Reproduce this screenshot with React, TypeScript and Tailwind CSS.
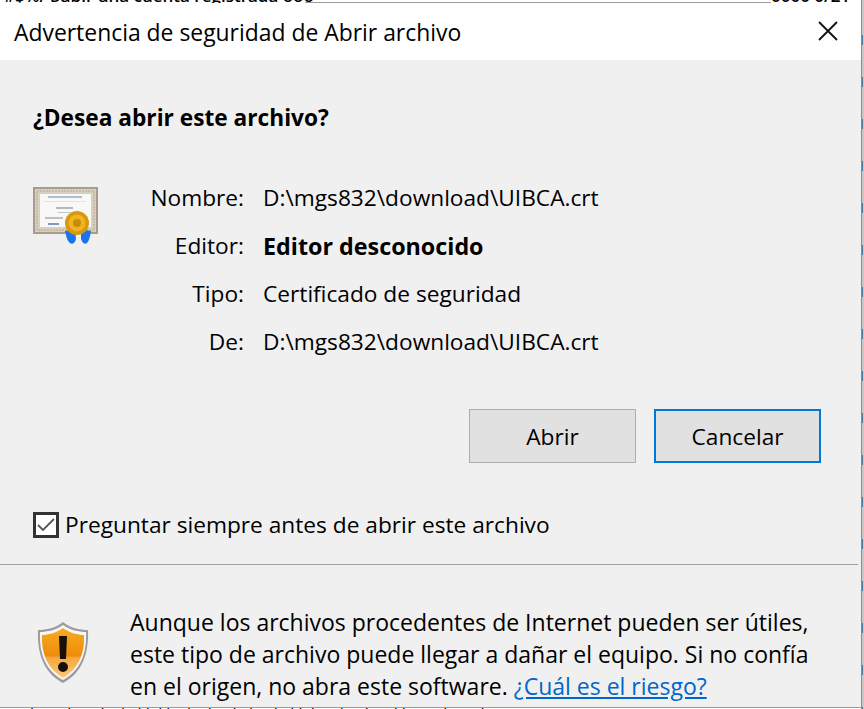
const rows = [
  { label: 'Nombre:', value: 'D:\\mgs832\\download\\UIBCA.crt', bold: false },
  { label: 'Editor:', value: 'Editor desconocido', bold: true },
  { label: 'Tipo:', value: 'Certificado de seguridad', bold: false },
  { label: 'De:', value: 'D:\\mgs832\\download\\UIBCA.crt', bold: false },
];

const CertIcon = () => (
  <svg width="66" height="58" viewBox="0 0 66 58" className="blur-[0.7px]">
    <rect x="0" y="0" width="65" height="47" fill="#a89d8c" />
    <rect x="2" y="2" width="61" height="43" fill="#d8cfbf" />
    <rect x="4" y="4" width="57" height="39" fill="none" stroke="#b5aa98" strokeWidth="1" strokeDasharray="2 1" />
    <rect x="7" y="7" width="51" height="33" fill="#f8f8f6" />
    <rect x="15" y="9" width="34" height="2" fill="#aebbdc" />
    <rect x="11" y="14" width="42" height="1" fill="#dfe3ee" />
    <rect x="23" y="20" width="17" height="2" fill="#b8b8bc" />
    <rect x="25" y="25" width="13" height="1" fill="#c4c4c4" />
    <rect x="12" y="30" width="18" height="2" fill="#bcc0c8" />
    <rect x="15" y="36" width="11" height="2" fill="#7f98c4" />
    <path d="M32 44 L42 42 L43 52 C42 57 38 58 36 55 C34 53 33 49 32 44 Z" fill="#1c74ea" />
    <path d="M48 42 L58 44 C57 50 56 54 54 56 C51 58 49 55 48 52 Z" fill="#1c74ea" />
    <circle cx="44" cy="36" r="12" fill="#d9970c" />
    <circle cx="44" cy="36" r="8.5" fill="#eeb422" />
    <circle cx="44" cy="36" r="4" fill="#c98a0c" />
  </svg>
);

const ShieldIcon = () => (
  <svg width="54" height="62" viewBox="0 0 54 62" className="blur-[0.4px]">
    <defs>
      <linearGradient id="shieldFill" x1="0" y1="0" x2="0" y2="1">
        <stop offset="0" stopColor="#f8ac20" />
        <stop offset="0.55" stopColor="#ee8c0c" />
        <stop offset="0.6" stopColor="#f6a83e" />
        <stop offset="1" stopColor="#fcc878" />
      </linearGradient>
    </defs>
    <path d="M27 0 C34 6 44 8 52 8 C53 32 46 51 27 61 C8 51 1 32 2 8 C10 8 20 6 27 0 Z" fill="#9c9c9c" />
    <path d="M27 3 C34 8 43 10 50 10 C51 32 44 49 27 58 C10 49 3 32 4 10 C11 10 20 8 27 3 Z" fill="#f6f6f6" />
    <path d="M27 6 C34 11 42 13 48 13 C49 32 42 47 27 56 C12 47 5 32 6 13 C12 13 20 11 27 6 Z" fill="url(#shieldFill)" />
    <path d="M23 14 L31 14 L30 37 L24 37 Z" fill="#17110a" />
    <circle cx="27" cy="45" r="5" fill="#17110a" />
  </svg>
);

export default function App() {
  return (
    <div className="flex h-[709px] w-[864px] overflow-hidden bg-white font-['Open_Sans','Noto_Sans',sans-serif] text-black">
      <div className="flex w-[861px] flex-col">
        <div className="flex h-[3px] items-start overflow-hidden text-[17px] font-semibold leading-[3px]">
          <span className="-mt-[6px] w-[305px] whitespace-nowrap pl-1">#$%/ Subir una cuenta registrada ooo</span>
          <div className="h-[3px] flex-1 border-b border-[#9a9a9a]" />
          <span className="-mt-[6px] w-[90px] whitespace-nowrap">0000 0/21</span>
        </div>

        <div className="flex h-[57px] items-center justify-between pl-[14px] pr-[23px] pt-[3px]">
          <span className="text-[22.9px]">Advertencia de seguridad de Abrir archivo</span>
          <svg width="20" height="20" viewBox="0 0 20 20" stroke="#111" strokeWidth="1.8" className="mb-1">
            <path d="M1 1 L19 19 M19 1 L1 19" />
          </svg>
        </div>

        <div className="flex h-[647px] flex-col overflow-hidden bg-[#f0f0f0] text-[22.7px]">
          <div className="pl-[33px] pt-[44px] font-bold leading-7">¿Desea abrir este archivo?</div>

          <div className="mt-[52px] flex pl-[33px]">
            <div className="w-[66px] pt-[3px]"><CertIcon /></div>
            <div className="ml-[45px] grid grid-cols-[100px_1fr] gap-x-[19px]">
              {rows.map((row) => (
                <div key={row.label} className="contents">
                  <span className="h-12 text-right leading-7">{row.label}</span>
                  <span className={row.bold ? 'text-[23.3px] font-bold leading-7' : 'leading-7'}>{row.value}</span>
                </div>
              ))}
            </div>
          </div>

          <div className="mt-[33px] flex justify-end gap-[18px] pr-[40px]">
            <button className="h-[54px] w-[167px] border border-[#adadad] bg-[#e1e1e1] pt-[3px]">Abrir</button>
            <button className="h-[54px] w-[167px] border-2 border-[#0078d7] bg-[#e1e1e1] pt-[3px]">Cancelar</button>
          </div>

          <div className="mt-[48px] flex h-7 items-center pl-[33px]">
            <div className="flex h-[26px] w-[26px] items-center justify-center border-[3px] border-[#333] bg-white">
              <svg width="18" height="14" viewBox="0 0 18 14" fill="none" stroke="#555" strokeWidth="1.8">
                <path d="M1 7 L6 12 L17 1" />
              </svg>
            </div>
            <span className="ml-[6px] leading-7">Preguntar siempre antes de abrir este archivo</span>
          </div>

          <div className="mr-[3px] mt-[25px] h-px bg-[#a0a0a0]" />

          <div className="flex pl-[36px] pt-[41px]">
            <div className="w-[54px] pt-[16px]"><ShieldIcon /></div>
            <p className="ml-[40px] w-[700px] text-[23px] leading-8">
              Aunque los archivos procedentes de Internet pueden ser útiles, este tipo de archivo puede llegar a dañar el equipo. Si no confía en el origen, no abra este software. <a className="text-[#0066cc] underline">¿Cuál es el riesgo?</a>
            </p>
          </div>
        </div>

        <div className="h-[2px] overflow-hidden whitespace-pre border-t border-[#9a9a9a] pl-[30px] text-[16px] leading-[12px] text-black">
          {'l        l       l    l   l l  l l    l    l     l   l     l   l l  l      l     l      l l         l        l'}
        </div>
      </div>

      <div className="w-[3px] border-l border-[#8c8c8c] bg-[#c8c8c8]">
        <div className="mt-[35px] h-[674px] w-px bg-[repeating-linear-gradient(to_bottom,#4f7896_0px,#4f7896_10px,transparent_10px,transparent_42px)]" />
      </div>
    </div>
  );
}
